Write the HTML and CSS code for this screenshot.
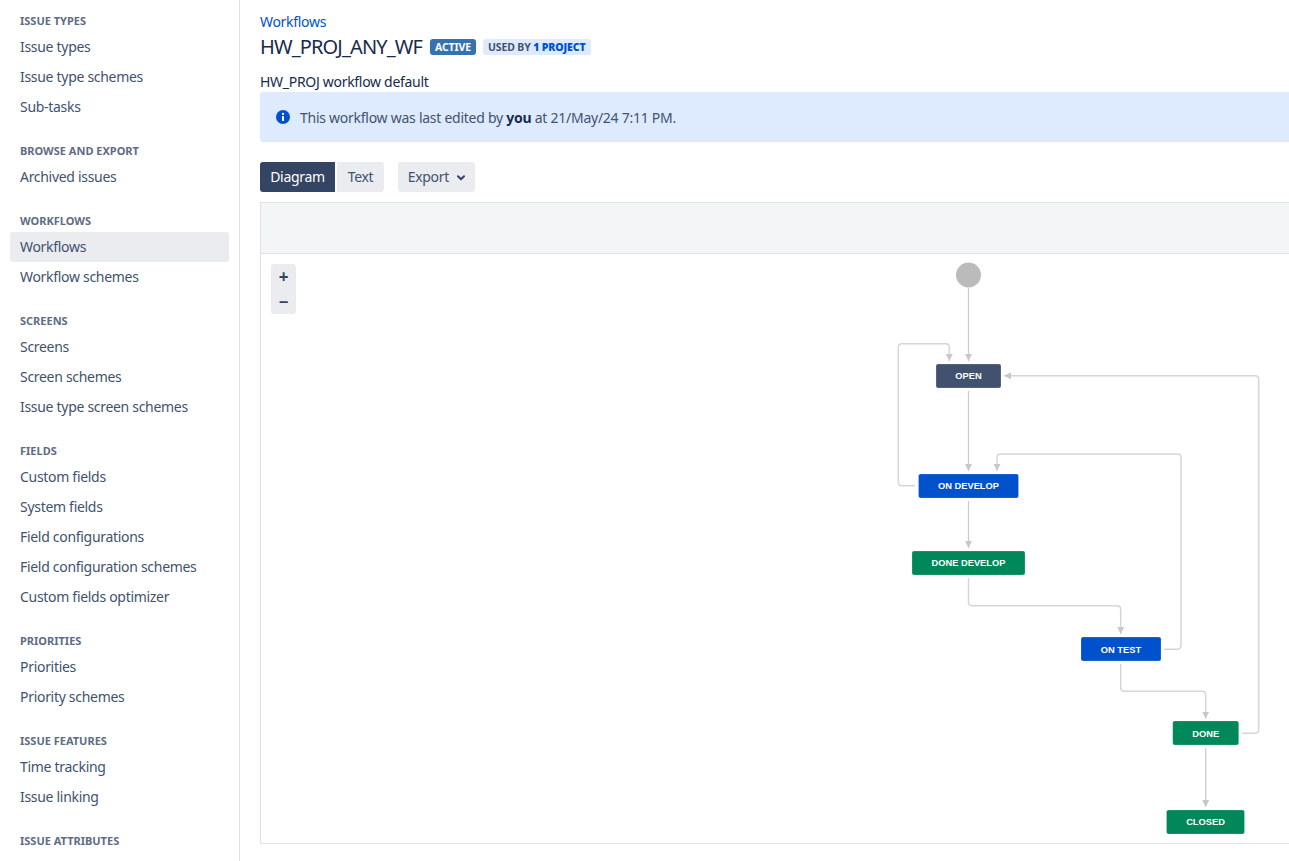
FILE: index.html
```html
<!DOCTYPE html>
<html lang="en">

<head>
    <meta charset="UTF-8">
    <title>View Workflow</title>
    <link rel="stylesheet" href="styles.css">
</head>

<body>
    <nav class="sidebar">
        <div class="nav-group">
            <h4>Issue types</h4>
            <a href="#">Issue types</a>
            <a href="#">Issue type schemes</a>
            <a href="#">Sub-tasks</a>
        </div>
        <div class="nav-group">
            <h4>Browse and export</h4>
            <a href="#">Archived issues</a>
        </div>
        <div class="nav-group">
            <h4>Workflows</h4>
            <a href="#" class="selected">Workflows</a>
            <a href="#">Workflow schemes</a>
        </div>
        <div class="nav-group">
            <h4>Screens</h4>
            <a href="#">Screens</a>
            <a href="#">Screen schemes</a>
            <a href="#">Issue type screen schemes</a>
        </div>
        <div class="nav-group">
            <h4>Fields</h4>
            <a href="#">Custom fields</a>
            <a href="#">System fields</a>
            <a href="#">Field configurations</a>
            <a href="#">Field configuration schemes</a>
            <a href="#">Custom fields optimizer</a>
        </div>
        <div class="nav-group">
            <h4>Priorities</h4>
            <a href="#">Priorities</a>
            <a href="#">Priority schemes</a>
        </div>
        <div class="nav-group">
            <h4>Issue features</h4>
            <a href="#">Time tracking</a>
            <a href="#">Issue linking</a>
        </div>
        <div class="nav-group">
            <h4>Issue attributes</h4>
        </div>
    </nav>

    <main class="content">
        <a href="#" class="crumb">Workflows</a>
        <div class="title-row">
            <h1>HW_PROJ_ANY_WF</h1>
            <span class="lozenge active">Active</span>
            <span class="lozenge used">Used by <b>1 project</b></span>
        </div>
        <p class="description">HW_PROJ workflow default</p>

        <div class="banner">
            <svg class="info-icon" width="14" height="14" viewBox="0 0 14 14">
                <circle cx="7" cy="7" r="7" fill="#0052cc"></circle>
                <circle cx="7" cy="3.9" r="1.1" fill="#fff"></circle>
                <rect x="6" y="5.9" width="2" height="5" rx="0.6" fill="#fff"></rect>
            </svg>
            <span>This workflow was last edited by <b>you</b> at 21/May/24 7:11 PM.</span>
        </div>

        <div class="toolbar">
            <button class="btn btn-on">Diagram</button>
            <button class="btn btn-text">Text</button>
            <button class="btn btn-export">Export
                <svg width="8" height="6" viewBox="0 0 8 6">
                    <path d="M1 1.2 L4 4.2 L7 1.2" fill="none" stroke="#344563" stroke-width="2" stroke-linecap="round" stroke-linejoin="round"></path>
                </svg>
            </button>
        </div>

        <div class="diagram">
            <div class="diagram-head"></div>
            <div class="canvas">
                <div class="zoom-box">
                    <span>+</span>
                    <span>&minus;</span>
                </div>
                <svg class="graph" width="1040" height="589" viewBox="261 254 1040 589">
                    <defs>
                        <marker id="tip" markerUnits="userSpaceOnUse" markerWidth="8" markerHeight="8" refX="7" refY="3.5" orient="auto">
                            <path d="M0 0 L7 3.5 L0 7 Z" fill="#c8c8c8"></path>
                        </marker>
                    </defs>

                    <circle cx="968.5" cy="275" r="12.5" fill="#bbbbbb"></circle>

                    <g class="edge">
                        <path marker-end="url(#tip)" d="M968.5 288 V361"></path>
                        <path marker-end="url(#tip)" d="M968.5 391 V471"></path>
                        <path marker-end="url(#tip)" d="M968.5 501 V548"></path>
                        <path marker-end="url(#tip)" d="M1205.7 748 V807"></path>
                        <path class="bent" marker-end="url(#tip)" d="M915 485.7 H902 Q898.3 485.7 898.3 482 V347.5 Q898.3 343.8 902 343.8 H945.6 Q949.3 343.8 949.3 347.5 V361"></path>
                        <path class="bent" marker-end="url(#tip)" d="M1241.7 733.3 H1255 Q1258.7 733.3 1258.7 729.6 V379.5 Q1258.7 375.8 1255 375.8 H1004"></path>
                        <path class="bent" marker-end="url(#tip)" d="M1164 649.3 H1177.3 Q1181 649.3 1181 645.6 V457.7 Q1181 454 1177.3 454 H1000.7 Q997 454 997 457.7 V471"></path>
                        <path class="bent" marker-end="url(#tip)" d="M968.5 578 V602 Q968.5 605.7 972.2 605.7 H1117 Q1120.7 605.7 1120.7 609.4 V634"></path>
                        <path class="bent" marker-end="url(#tip)" d="M1120.7 664 V687.6 Q1120.7 691.3 1124.4 691.3 H1202 Q1205.7 691.3 1205.7 695 V718.7"></path>
                    </g>

                    <g class="node">
                        <rect class="st-todo" x="936" y="364" width="65" height="24" rx="2"></rect>
                        <text x="968.5" y="379">OPEN</text>
                        <rect class="st-progress" x="918.5" y="474" width="100" height="24" rx="2"></rect>
                        <text x="968.5" y="489">ON DEVELOP</text>
                        <rect class="st-done" x="912" y="551" width="113" height="24" rx="2"></rect>
                        <text x="968.5" y="566">DONE DEVELOP</text>
                        <rect class="st-progress" x="1081" y="637" width="80" height="24" rx="2"></rect>
                        <text x="1121" y="653">ON TEST</text>
                        <rect class="st-done" x="1172.7" y="721" width="66" height="24" rx="2"></rect>
                        <text x="1205.7" y="737">DONE</text>
                        <rect class="st-done" x="1166.5" y="810" width="78" height="24" rx="2"></rect>
                        <text x="1205.5" y="825">CLOSED</text>
                    </g>
                </svg>
            </div>
        </div>
    </main>
</body>

</html>
```

FILE: styles.css
```css
html,
body {
    height: 100%;
    margin: 0;
    overflow: hidden;
}

body {
    display: flex;
    background-color: white;
    font-family: "Noto Sans", sans-serif;
    font-size: 14px;
    letter-spacing: -0.3px;
    color: rgb(23, 43, 77);
}

.sidebar {
    flex: none;
    width: 240px;
    box-sizing: border-box;
    padding: 13px 10px 0;
    border-right: 1px solid rgb(223, 225, 230);
    overflow: hidden;
}

.nav-group {
    margin-bottom: 21px;
}

.nav-group h4 {
    margin: 0 0 3px;
    padding-left: 10px;
    font-size: 11px;
    line-height: 16px;
    font-weight: 700;
    letter-spacing: 0;
    text-transform: uppercase;
    color: rgb(94, 108, 132);
}

.nav-group a {
    display: block;
    height: 30px;
    padding-left: 10px;
    line-height: 30px;
    border-radius: 3px;
    color: rgb(66, 82, 110);
    text-decoration: none;
}

.nav-group a.selected {
    background-color: rgb(235, 236, 240);
}

.content {
    flex: none;
    width: 1060px;
    box-sizing: border-box;
    padding: 12px 0 0 20px;
}

.crumb {
    display: block;
    line-height: 20px;
    color: rgb(0, 82, 204);
    text-decoration: none;
}

.title-row {
    display: flex;
    align-items: center;
    height: 24px;
    margin-top: 3px;
}

.title-row h1 {
    margin: 0 8px 0 0;
    font-size: 20px;
    line-height: 24px;
    font-weight: 400;
    letter-spacing: -0.85px;
}

.lozenge {
    height: 16px;
    margin-right: 7px;
    padding: 0 5px;
    border-radius: 3px;
    font-size: 10.5px;
    line-height: 16px;
    font-weight: 700;
    letter-spacing: -0.13px;
    text-transform: uppercase;
}

.lozenge.active {
    background-color: rgb(53, 114, 176);
    color: white;
}

.lozenge.used {
    background-color: rgb(222, 235, 255);
    color: rgb(66, 82, 110);
}

.lozenge.used b {
    color: rgb(0, 82, 204);
}

.description {
    margin: 13px 0 0;
    line-height: 20px;
}

.banner {
    display: flex;
    align-items: center;
    gap: 10px;
    height: 50px;
    box-sizing: border-box;
    padding-left: 16px;
    border-radius: 3px;
    background-color: rgb(222, 235, 255);
    letter-spacing: -0.26px;
    color: rgb(66, 82, 110);
}

.banner b {
    color: rgb(23, 43, 77);
}

.toolbar {
    display: flex;
    margin-top: 20px;
}

.btn {
    height: 30px;
    padding: 0 0 2px;
    border: 0;
    border-radius: 3px;
    background-color: rgb(235, 236, 240);
    font-family: inherit;
    font-size: 14px;
    letter-spacing: inherit;
    color: rgb(66, 82, 110);
}

.btn-on {
    width: 75px;
    background-color: rgb(52, 69, 99);
    color: white;
    border-radius: 3px 0 0 3px;
}

.btn-text {
    width: 47px;
    margin-left: 2px;
    border-radius: 0 3px 3px 0;
}

.btn-export {
    width: 77px;
    margin-left: 14px;
}

.btn-export svg {
    margin-left: 5px;
    vertical-align: 1px;
}

.diagram {
    height: 642px;
    box-sizing: border-box;
    margin-top: 10px;
    border: 1px solid rgb(223, 225, 230);
}

.diagram-head {
    height: 50px;
    border-bottom: 1px solid rgb(223, 225, 230);
    background-color: rgb(244, 245, 247);
}

.canvas {
    position: relative;
    height: 589px;
    overflow: hidden;
}

.graph {
    display: block;
}

.zoom-box {
    position: absolute;
    left: 10px;
    top: 10px;
    width: 25px;
    height: 50px;
    display: flex;
    flex-direction: column;
    border-radius: 3px;
    background-color: rgb(235, 236, 240);
    font-weight: 700;
    font-size: 17px;
    color: rgb(52, 69, 99);
}

.zoom-box span {
    height: 25px;
    line-height: 26px;
    text-align: center;
}

.edge path {
    fill: none;
    stroke: rgb(204, 204, 204);
    stroke-width: 1.3;
}

.edge path.bent {
    stroke: rgb(214, 214, 214);
    stroke-width: 1.5;
}

.node rect {
    stroke: rgba(255, 255, 255, 0.4);
    stroke-width: 0.5;
}

.node text {
    font-family: "Liberation Sans", sans-serif;
    font-size: 9.3px;
    font-weight: 700;
    letter-spacing: 0;
    fill: white;
    text-anchor: middle;
}

.st-todo {
    fill: rgb(66, 82, 110);
}

.st-progress {
    fill: rgb(0, 82, 204);
}

.st-done {
    fill: rgb(0, 135, 90);
}
```
